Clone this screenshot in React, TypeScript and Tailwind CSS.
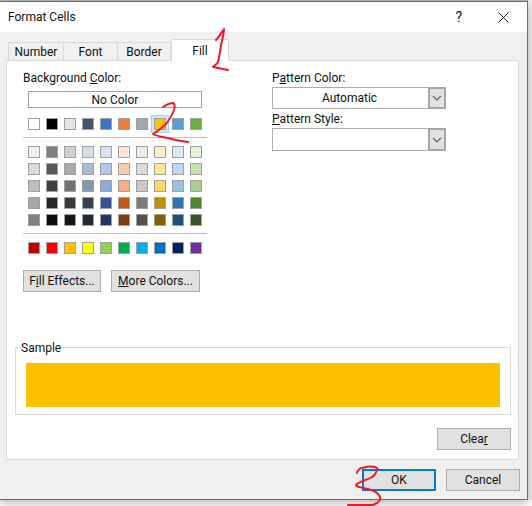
const themeColors = ['#ffffff', '#000000', '#e7e6e6', '#44546a', '#4472c4', '#ed7d31', '#a5a5a5', '#ffc000', '#5b9bd5', '#70ad47'];

const tintColors = [
  '#f2f2f2', '#808080', '#d0cece', '#d6dce4', '#d9e1f2', '#fce4d6', '#ededed', '#fff2cc', '#ddebf7', '#e2efda',
  '#d9d9d9', '#595959', '#aeaaaa', '#acb9ca', '#b4c6e7', '#f8cbad', '#dbdbdb', '#ffe699', '#bdd7ee', '#c6e0b4',
  '#bfbfbf', '#404040', '#757171', '#8497b0', '#8ea9db', '#f4b084', '#c9c9c9', '#ffd966', '#9bc2e6', '#a9d08e',
  '#a6a6a6', '#262626', '#3a3838', '#333f4f', '#305496', '#c65911', '#7b7b7b', '#bf8f00', '#2f75b5', '#548235',
  '#808080', '#0d0d0d', '#161616', '#222b35', '#203764', '#833c0c', '#525252', '#806000', '#1f4e78', '#375623',
];

const standardColors = ['#c00000', '#ff0000', '#ffc000', '#ffff00', '#92d050', '#00b050', '#00b0f0', '#0070c0', '#002060', '#7030a0'];

const Swatch = ({ color, selected }: { color: string; selected?: boolean }) => (
  <div className="relative w-[12px] h-[12px]">
    {selected && <div className="absolute -inset-[3px] border border-[#99d1ff] bg-[#cce8ff]" />}
    <div className="absolute inset-0 border border-[#a0a0a0]" style={{ backgroundColor: color }} />
  </div>
);

const Combo = ({ value, height }: { value: string; height: string }) => (
  <div className={`flex w-[174px] ${height} bg-white`}>
    <div className="flex-1 flex items-center justify-center pr-[2px] border border-r-0 border-[#adadad]">{value}</div>
    <div className="w-[18px] flex items-center justify-center bg-[#e1e1e1] border-2 border-[#a6a6a6]">
      <svg width="10" height="6" viewBox="0 0 10 6" fill="none" stroke="#606060" strokeWidth="1.2">
        <path d="M1 1l4 4 4-4" />
      </svg>
    </div>
  </div>
);

const Button = ({ children, className }: { children: React.ReactNode; className: string }) => (
  <div className={`flex items-center justify-center h-[22px] bg-[#e1e1e1] ${className}`}>{children}</div>
);

const App = () => {
  return (
    <div className="relative w-[532px] h-[506px] overflow-hidden bg-white text-[12px] leading-none text-[#111] font-['Roboto','Noto_Sans',sans-serif]">
      <div className="h-[1px] bg-[#b4b4b4]" />
      <div className="absolute right-0 top-0 w-[4px] h-[500px] bg-[#ececec]" />

      <div className="relative flex flex-col w-[528px] h-[499px] border-t border-r border-b border-[#1a84d6] bg-[#f0f0f0] shadow-[0_4px_8px_rgba(0,0,0,0.25)]">
        {/* title bar */}
        <div className="flex items-center h-[30px] bg-white pl-[8px] shrink-0">
          <span>Format Cells</span>
          <span className="ml-auto text-[14px]">?</span>
          <svg className="ml-[36px] mr-[18px]" width="11" height="11" viewBox="0 0 11 11" stroke="#222" strokeWidth="1">
            <path d="M0.5 0.5l10 10M10.5 0.5l-10 10" />
          </svg>
        </div>

        {/* tabs */}
        <div className="flex items-end h-[28px] pl-[8px] shrink-0">
          <div className="flex items-center justify-center w-[56px] h-[18px] bg-[#f0f0f0] border border-b-0 border-[#d9d9d9]">Number</div>
          <div className="flex items-center justify-center w-[54px] h-[18px] bg-[#f0f0f0] border-t border-r border-[#d9d9d9]">Font</div>
          <div className="flex items-center justify-center w-[53px] h-[18px] bg-[#f0f0f0] border-t border-r border-[#d9d9d9]">Border</div>
          <div className="relative z-10 flex items-center justify-center w-[58px] h-[22px] -mb-[1px] bg-white border border-b-0 border-[#d9d9d9]">Fill</div>
        </div>

        {/* fill panel */}
        <div className="ml-[6px] w-[513px] h-[400px] pl-[8px] pr-[7px] pt-[11px] bg-white border border-[#d9d9d9] shrink-0">
          <div className="flex h-[264px]">
            <div className="w-[257px] pl-[8px]">
              <div className="h-[14px]">Background <u>C</u>olor:</div>
              <div className="flex items-center justify-center w-[174px] h-[17px] mt-[5px] ml-[5px] border border-[#a0a0a0]">No Color</div>
              <div className="ml-[5px] mt-[10px] flex gap-[6px]">
                {themeColors.map((c) => (
                  <Swatch key={c} color={c} selected={c === '#ffc000'} />
                ))}
              </div>
              <div className="w-[184px] h-[1px] mt-[7px] bg-[#bdbdbd]" />
              <div className="ml-[5px] mt-[8px] grid grid-cols-[repeat(10,12px)] gap-x-[6px] gap-y-[5px]">
                {tintColors.map((c, i) => (
                  <Swatch key={i} color={c} />
                ))}
              </div>
              <div className="w-[184px] h-[1px] mt-[7px] bg-[#bdbdbd]" />
              <div className="ml-[5px] mt-[8px] flex gap-[6px]">
                {standardColors.map((c) => (
                  <Swatch key={c} color={c} />
                ))}
              </div>
              <div className="flex gap-[10px] mt-[16px]">
                <Button className="w-[78px] border border-[#adadad]">F<u>i</u>ll Effects...</Button>
                <Button className="w-[89px] border border-[#adadad]"><u>M</u>ore Colors...</Button>
              </div>
            </div>

            <div>
              <div className="h-[14px]">P<u>a</u>ttern Color:</div>
              <div className="mt-[1px]"><Combo value="Automatic" height="h-[22px]" /></div>
              <div className="h-[14px] mt-[4px]"><u>P</u>attern Style:</div>
              <div className="mt-[1px]"><Combo value="" height="h-[23px]" /></div>
            </div>
          </div>

          {/* sample */}
          <div className="relative mt-[11px] w-[496px] h-[68px] border border-[#d9d9d9] px-[10px] pt-[15px]">
            <span className="absolute left-[5px] -top-[6px] bg-white">Sample</span>
            <div className="h-[44px] bg-[#ffc000]" />
          </div>

          <div className="flex justify-end mt-[13px]">
            <Button className="w-[74px] border border-[#adadad]">Clea<u>r</u></Button>
          </div>
        </div>

        {/* footer */}
        <div className="flex justify-end gap-[10px] pr-[7px] pt-[9px]">
          <Button className="w-[74px] border-2 border-[#0078d7]">OK</Button>
          <Button className="w-[74px] border border-[#adadad]">Cancel</Button>
        </div>
      </div>

      {/* red pen annotations */}
      <svg className="absolute inset-0 z-20 pointer-events-none" width="532" height="506" fill="none" stroke="#ec1c24" strokeWidth="2" strokeLinecap="round" strokeLinejoin="round">
        <path d="M216 40C219 37 222 32 224 29C224 34 222 40 221 45C220 52 219 58 218 62C216 65 214 66 213 67C218 68 223 69 228 70" />
        <path d="M163 107C166 105 170 103 173 103C175 104 175 107 174 110C172 115 169 121 165 125C161 129 156 132 153 134C156 136 162 137 168 138C174 140 181 141 188 142" />
        <path d="M357 473C358 470 360 468 362 468C366 467 371 466 375 467C378 468 378 469 377 470C376 473 374 476 372 477C367 480 358 482 356 485C356 487 360 487 363 488C368 489 374 490 377 493C380 496 381 498 380 500C378 503 376 504 373 505C365 505 356 505 348 505" />
      </svg>
    </div>
  );
};

export default App;
